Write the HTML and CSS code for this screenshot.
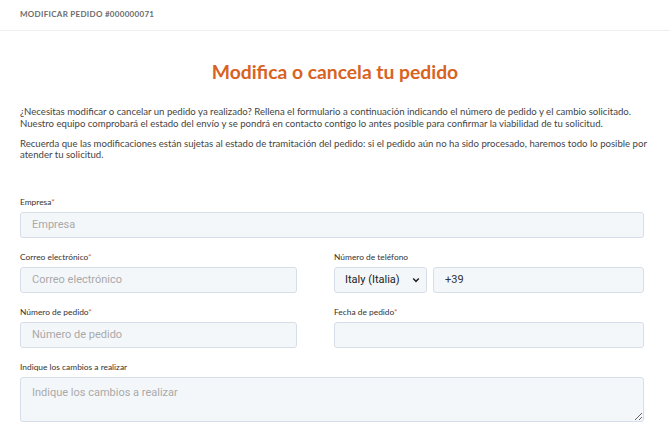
FILE: index.html
```html
<!DOCTYPE html>
<html lang="es">
<head>
<meta charset="utf-8">
<link rel="stylesheet" href="styles.css">
</head>
<body>
<div class="topbar"><span class="crumb">MODIFICAR PEDIDO #000000071</span></div>
<main class="content">
  <h1 class="title">Modifica o cancela tu pedido</h1>
  <p class="intro">¿Necesitas modificar o cancelar un pedido ya realizado? Rellena el formulario a continuación indicando el número de pedido y el cambio solicitado. Nuestro equipo comprobará el estado del envío y se pondrá en contacto contigo lo antes posible para confirmar la viabilidad de tu solicitud.</p>
  <p class="intro">Recuerda que las modificaciones están sujetas al estado de tramitación del pedido: si el pedido aún no ha sido procesado, haremos todo lo posible por atender tu solicitud.</p>
  <form class="form">
    <div class="field full">
      <label class="label">Empresa<span class="req">*</span></label>
      <input class="input" placeholder="Empresa">
    </div>
    <div class="row">
      <div class="field">
        <label class="label">Correo electrónico<span class="req">*</span></label>
        <input class="input" placeholder="Correo electrónico">
      </div>
      <div class="field">
        <label class="label">Número de teléfono</label>
        <div class="phone">
          <div class="select">Italy (Italia)<svg class="chev" viewBox="0 0 10 10" width="8" height="8"><path d="M1.5 3.2 L5 6.7 L8.5 3.2" fill="none" stroke="#222" stroke-width="1.8"/></svg></div>
          <input class="input tel" value="+39">
        </div>
      </div>
    </div>
    <div class="row">
      <div class="field">
        <label class="label">Número de pedido<span class="req">*</span></label>
        <input class="input" placeholder="Número de pedido">
      </div>
      <div class="field">
        <label class="label">Fecha de pedido<span class="req">*</span></label>
        <input class="input" placeholder="">
      </div>
    </div>
    <div class="field full">
      <label class="label">Indique los cambios a realizar</label>
      <textarea class="input area" placeholder="Indique los cambios a realizar"></textarea>
    </div>
  </form>
</main>
</body>
</html>
```
FILE: styles.css
```css
* { box-sizing: border-box; }
html, body { margin: 0; padding: 0; background: #fff; }
body { font-family: "Lato", "Open Sans", sans-serif; color: #3a3a3a; width: 670px; overflow: hidden; }
.topbar { height: 31px; border-bottom: 1px solid #eeeeee; padding: 9px 20px 0; font-size: 8px; line-height: 10px; }
.crumb { font-size: 8px; font-weight: 700; letter-spacing: 0.3px; color: #6b6b6b; }
.content { padding: 0 26px 0 20px; }
.title { margin: 28px 0 0; text-align: center; font-size: 19.3px; font-weight: 700; color: #d8631f; line-height: 26px; padding-left: 6px; }
.intro { margin: 21px -8px 0 0; font-size: 9.6px; line-height: 11.5px; color: #444; }
.intro + .intro { margin-top: 8.5px; }
.form { margin-top: 36px; display: flex; flex-direction: column; gap: 14px; }
.row { display: grid; grid-template-columns: 277px 310px; column-gap: 37px; }
.field { display: flex; flex-direction: column; }
.label { font-size: 8.4px; color: #333; line-height: 10px; margin-bottom: 5px; }
.req { color: #d8631f; }
.input { height: 26px; border: 1px solid #d6dee7; border-radius: 3px; background: #f4f7fa; font-family: "Roboto", "Liberation Sans", sans-serif; font-size: 11px; color: #333; padding: 0 11px; width: 100%; outline: none; }
.input::placeholder { color: #a9a9a9; }
.phone { display: flex; gap: 6px; }
.select { width: 93px; flex: none; height: 26px; border: 1px solid #d6dee7; border-radius: 3px; background: #f4f7fa; font-family: "Roboto", "Liberation Sans", sans-serif; font-size: 11px; color: #222; display: flex; align-items: center; justify-content: space-between; padding: 0 6px 0 10px; }
.tel { flex: 1; }
.area { height: 45px; padding-top: 8px; resize: vertical; }
```
